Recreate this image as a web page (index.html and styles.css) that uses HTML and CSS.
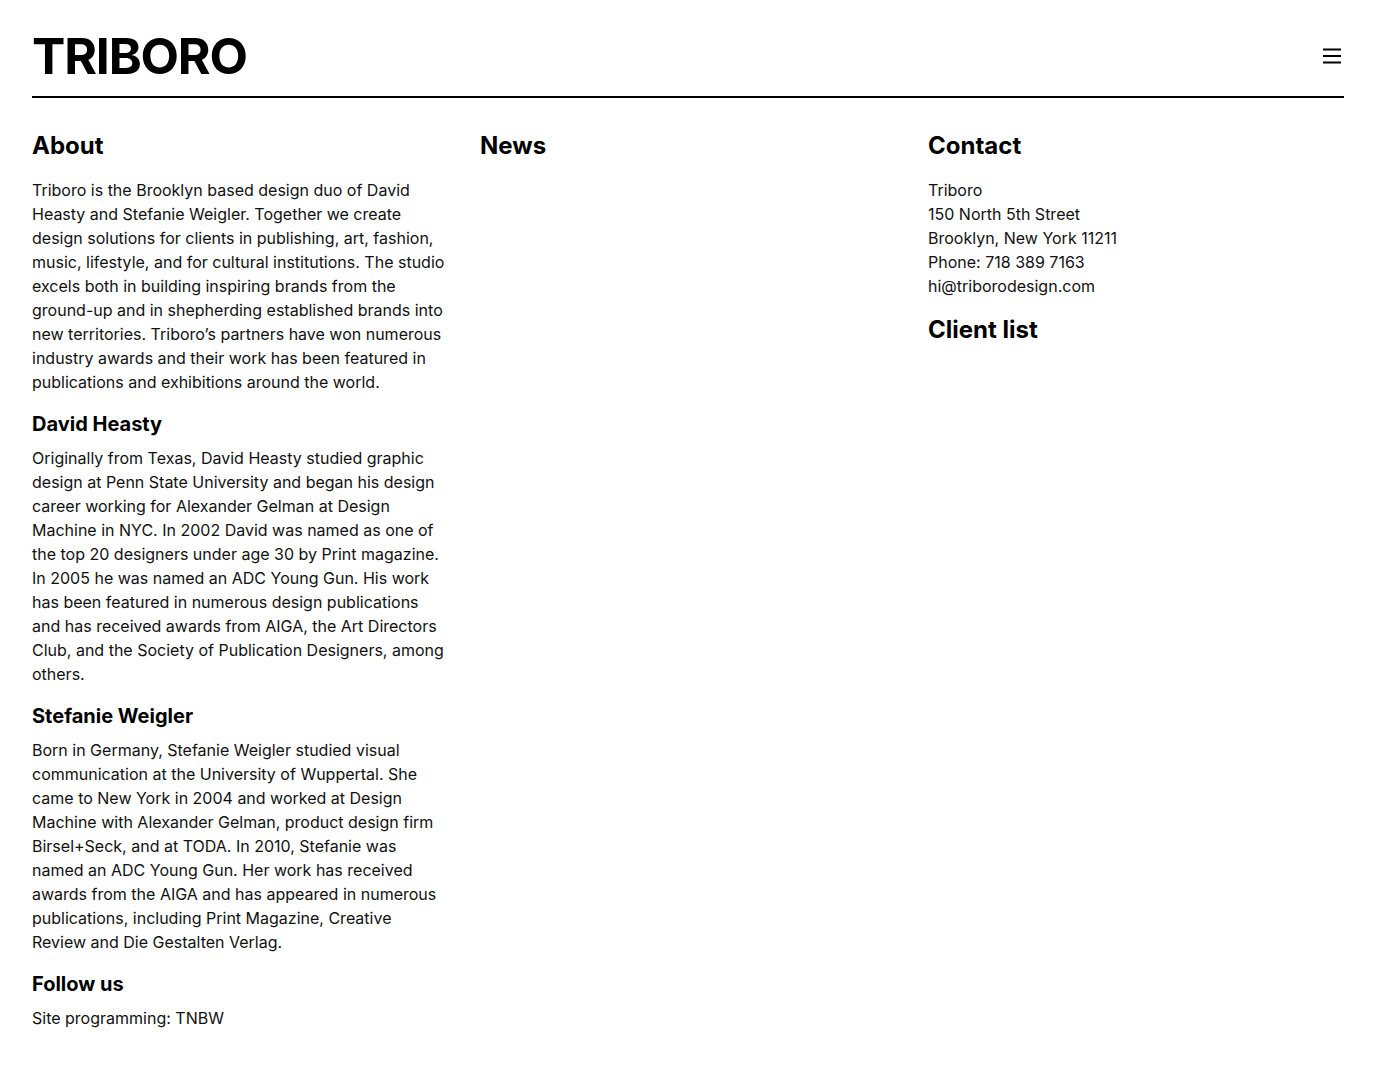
FILE: index.html
```html
<!DOCTYPE html>
<html lang="en">
<head>
<meta charset="utf-8">
<title>Triboro</title>
<link rel="stylesheet" href="styles.css">
</head>
<body>
<header class="site-header">
  <h1 class="logo">TRIBORO</h1>
  <button class="menu-btn" aria-label="Menu">
    <svg width="20" height="16" viewBox="0 0 20 16"><path d="M1 1.5h18M1 8h18M1 14.5h18" stroke="#000" stroke-width="2" fill="none"/></svg>
  </button>
</header>
<main class="columns">
  <section class="col">
    <h2 class="col-title">About</h2>
    <p>Triboro is the Brooklyn based design duo of David Heasty and Stefanie Weigler. Together we create design solutions for clients in publishing, art, fashion, music, lifestyle, and for cultural institutions. The studio excels both in building inspiring brands from the ground-up and in shepherding established brands into new territories. Triboro’s partners have won numerous industry awards and their work has been featured in publications and exhibitions around the world.</p>
    <h3 class="sub-title">David Heasty</h3>
    <p>Originally from Texas, David Heasty studied graphic design at Penn State University and began his design career working for Alexander Gelman at Design Machine in NYC. In 2002 David was named as one of the top 20 designers under age 30 by Print magazine. In 2005 he was named an ADC Young Gun. His work has been featured in numerous design publications and has received awards from AIGA, the Art Directors Club, and the Society of Publication Designers, among others.</p>
    <h3 class="sub-title">Stefanie Weigler</h3>
    <p>Born in Germany, Stefanie Weigler studied visual communication at the University of Wuppertal. She came to New York in 2004 and worked at Design Machine with Alexander Gelman, product design firm Birsel+Seck, and at TODA. In 2010, Stefanie was named an ADC Young Gun. Her work has received awards from the AIGA and has appeared in numerous publications, including Print Magazine, Creative Review and Die Gestalten Verlag.</p>
    <h3 class="sub-title">Follow us</h3>
    <p>Site programming: TNBW</p>
  </section>
  <section class="col">
    <h2 class="col-title">News</h2>
  </section>
  <section class="col">
    <h2 class="col-title">Contact</h2>
    <p>Triboro<br>150 North 5th Street<br>Brooklyn, New York 11211<br>Phone: 718 389 7163<br>hi@triborodesign.com</p>
    <h2 class="col-title">Client list</h2>
  </section>
</main>
</body>
</html>
```

FILE: styles.css
```css
* { box-sizing: border-box; }
body {
  margin: 0;
  padding: 0 32px 32px;
  font-family: Inter, "Noto Sans", sans-serif;
  color: #111;
  background: #fff;
  font-size: 16px;
  line-height: 24px;
}
.site-header {
  display: flex;
  justify-content: space-between;
  align-items: center;
  padding-top: 28px;
  padding-bottom: 12px;
  border-bottom: 2px solid #000;
}
.logo {
  margin: 0;
  font-size: 50px;
  line-height: 56px;
  font-weight: 700;
  color: #000;
  letter-spacing: -1.2px;
}
.menu-btn {
  border: 0;
  background: none;
  padding: 0;
  margin-right: 2px;
  display: flex;
  cursor: pointer;
}
.columns {
  display: grid;
  grid-template-columns: repeat(3, 1fr);
  gap: 32px;
  padding-top: 32px;
}
.col p { margin: 0 0 16px; }
.col-title {
  margin: 0 0 16px;
  font-size: 24px;
  line-height: 32px;
  font-weight: 700;
  color: #000;
}
.sub-title {
  margin: 0 0 8px;
  font-size: 20px;
  line-height: 28px;
  font-weight: 700;
  color: #000;
}
```
